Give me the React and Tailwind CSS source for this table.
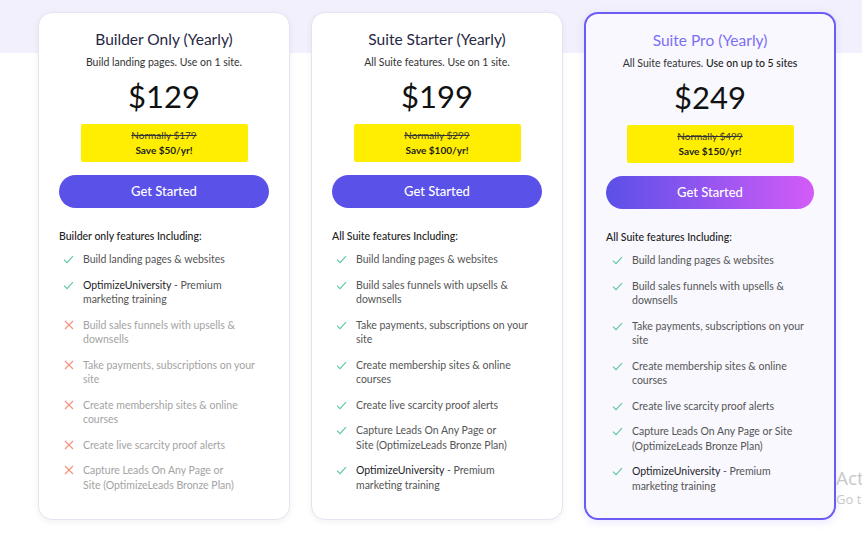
import React from 'react';

const plans = [
  {
    title: 'Builder Only (Yearly)',
    subtitle: <>Build landing pages. Use on 1 site.</>,
    price: '$129',
    normally: 'Normally $179',
    save: 'Save $50/yr!',
    heading: 'Builder only features Including:',
    features: [
      { ok: true, lines: ['Build landing pages & websites'] },
      { ok: true, uni: true, lines: ['- Premium', 'marketing training'] },
      { ok: false, lines: ['Build sales funnels with upsells &', 'downsells'] },
      { ok: false, lines: ['Take payments, subscriptions on your', 'site'] },
      { ok: false, lines: ['Create membership sites & online', 'courses'] },
      { ok: false, lines: ['Create live scarcity proof alerts'] },
      { ok: false, lines: ['Capture Leads On Any Page or', 'Site (OptimizeLeads Bronze Plan)'] },
    ],
  },
  {
    title: 'Suite Starter (Yearly)',
    subtitle: <>All Suite features. Use on 1 site.</>,
    price: '$199',
    normally: 'Normally $299',
    save: 'Save $100/yr!',
    heading: 'All Suite features Including:',
    features: [
      { ok: true, lines: ['Build landing pages & websites'] },
      { ok: true, lines: ['Build sales funnels with upsells &', 'downsells'] },
      { ok: true, lines: ['Take payments, subscriptions on your', 'site'] },
      { ok: true, lines: ['Create membership sites & online', 'courses'] },
      { ok: true, lines: ['Create live scarcity proof alerts'] },
      { ok: true, lines: ['Capture Leads On Any Page or', 'Site (OptimizeLeads Bronze Plan)'] },
      { ok: true, uni: true, lines: ['- Premium', 'marketing training'] },
    ],
  },
  {
    pro: true,
    title: 'Suite Pro (Yearly)',
    subtitle: <>All Suite features. <span className="font-medium text-[#222]">Use on up to 5 sites</span></>,
    price: '$249',
    normally: 'Normally $499',
    save: 'Save $150/yr!',
    heading: 'All Suite features Including:',
    features: [
      { ok: true, lines: ['Build landing pages & websites'] },
      { ok: true, lines: ['Build sales funnels with upsells &', 'downsells'] },
      { ok: true, lines: ['Take payments, subscriptions on your', 'site'] },
      { ok: true, lines: ['Create membership sites & online', 'courses'] },
      { ok: true, lines: ['Create live scarcity proof alerts'] },
      { ok: true, lines: ['Capture Leads On Any Page or Site', '(OptimizeLeads Bronze Plan)'] },
      { ok: true, uni: true, lines: ['- Premium', 'marketing training'] },
    ],
  },
];

const Check = () => (
  <svg width="11" height="9" viewBox="0 0 11 9" fill="none" className="mt-[3px] shrink-0">
    <path d="M1 4.6 L4 7.6 L10 1.2" stroke="#5cc79e" strokeWidth="1.1" />
  </svg>
);

const Cross = () => (
  <svg width="10" height="10" viewBox="0 0 10 10" fill="none" className="mt-[2px] shrink-0">
    <path d="M1 1 L9 9 M9 1 L1 9" stroke="#f2907a" strokeWidth="1.1" />
  </svg>
);

const Feature = ({ f }) => (
  <li className="flex items-start gap-[9px]">
    <span className="flex w-[11px] justify-center">{f.ok ? <Check /> : <Cross />}</span>
    <div className={`text-[10.5px] leading-[14.5px] ${f.ok ? 'text-[#555]' : 'text-[#a3a3a3]'}`}>
      {f.lines.map((l, i) => (
        <div key={i} className="whitespace-nowrap">
          {f.uni && i === 0 && <span className="text-[#1e1e2a]">OptimizeUniversity </span>}
          {l}
        </div>
      ))}
    </div>
  </li>
);

const Card = ({ p }) => (
  <div
    className={`flex h-[508px] w-[252px] flex-col rounded-[14px] px-5 pt-[17px] ${
      p.pro
        ? 'border-2 border-[#6b5cf4] bg-[#f8f8fe] shadow-[0_2px_8px_rgba(107,92,244,0.15)]'
        : 'border border-[#e4e4f0] bg-white shadow-[0_2px_6px_rgba(30,30,80,0.06)]'
    }`}
  >
    <h2 className={`text-center text-[15.5px] leading-[18px] ${p.pro ? 'text-[#7c6ff5]' : 'text-[#27273f]'}`}>
      {p.title}
    </h2>
    <p className="mt-[7px] text-center text-[10.5px] leading-[14px] text-[#333]">{p.subtitle}</p>
    <div className="mt-[7px] text-center text-[31px] leading-[40px] text-[#111]">{p.price}</div>
    <div className="mx-auto mt-[8px] flex h-[38px] w-[167px] flex-col items-center justify-center rounded-[2px] bg-[#ffee00] text-[10px] leading-[15px] text-[#333]">
      <span className="line-through">{p.normally}</span>
      <span className="font-bold text-[#222]">{p.save}</span>
    </div>
    <button
      className={`mt-[13px] h-[33px] w-full rounded-full text-[13px] font-medium text-white ${
        p.pro ? 'bg-[linear-gradient(to_right,#5b50e8,#d35bf8)]' : 'bg-[#5a51e8]'
      }`}
    >
      Get Started
    </button>
    <div className="mt-[21px] text-[10.5px] font-medium leading-[14px] text-[#222]">{p.heading}</div>
    <ul className={`mt-[9px] flex flex-col gap-[11px] ${p.pro ? 'pl-[6px]' : 'pl-[4px]'}`}>
      {p.features.map((f, i) => (
        <Feature key={i} f={f} />
      ))}
    </ul>
  </div>
);

const App = () => {
  return (
    <div
      className="relative h-[540px] w-[862px] overflow-hidden bg-[linear-gradient(to_bottom,#f1f0fc_53px,#ffffff_53px)]"
      style={{ fontFamily: 'Lato, "Noto Sans", sans-serif' }}
    >
      <div className="flex gap-[21px] pl-[38px] pt-[12px]">
        {plans.map((p, i) => (
          <Card key={i} p={p} />
        ))}
      </div>
      <div className="absolute left-[836px] top-[466px] whitespace-nowrap text-[#c8c8c8]" style={{ fontFamily: '"Open Sans", sans-serif' }}>
        <div className="text-[19px] leading-[24px]">Activate Windows</div>
        <div className="text-[13px] leading-[18px]">Go to Settings to activate Windows.</div>
      </div>
    </div>
  );
};

export default App;
